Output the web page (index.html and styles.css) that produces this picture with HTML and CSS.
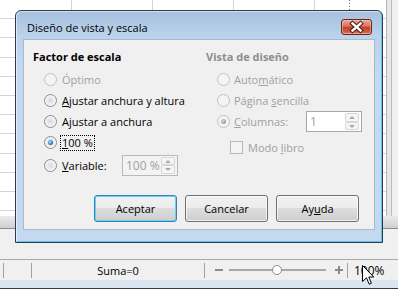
FILE: index.html
```html
<!DOCTYPE html>
<html lang="es">
<head>
    <meta charset="UTF-8">
    <title>Diseño de vista y escala</title>
    <link rel="stylesheet" href="styles.css">
</head>
<body>
<div class="screen">
    <div class="sheet">
        <div class="cells-row">
            <div class="cells"></div>
            <div class="vscroll"></div>
        </div>
        <div class="hscroll"></div>
        <div class="tabbar"></div>
    </div>

    <div class="status">
        <span class="cell cell-a"></span>
        <span class="sep"></span>
        <span class="cell cell-b"></span>
        <span class="sep"></span>
        <span class="cell cell-sum">Suma=0</span>
        <span class="sep"></span>
        <span class="cell cell-zoom">
            <span class="minus"></span>
            <span class="track"><span class="thumb"></span></span>
            <span class="plus"></span>
        </span>
        <span class="sep"></span>
        <span class="cell cell-pct">100%</span>
    </div>
    <div class="taskbar"></div>

    <!-- dialog window floating over the sheet -->
    <div class="dialog">
        <div class="titlebar">
            <span class="title">Diseño de vista y escala</span>
            <span class="close">
                <svg width="31" height="16" viewBox="0 0 31 16">
                    <path d="M11.5 4.5 L19.5 11.5 M19.5 4.5 L11.5 11.5" stroke="#4a1810" stroke-width="4.4" stroke-linecap="square" fill="none"/>
                    <path d="M11.5 4.5 L19.5 11.5 M19.5 4.5 L11.5 11.5" stroke="#ffffff" stroke-width="2.4" stroke-linecap="square" fill="none"/>
                </svg>
            </span>
        </div>
        <div class="client">
            <div class="panes">
                <div class="pane pane-left">
                    <div class="group-title">Factor de escala</div>
                    <div class="rows">
                        <div class="row off"><span class="radio"></span><span>Óptimo</span></div>
                        <div class="row"><span class="radio"></span><span><u>A</u>justar anchura y altura</span></div>
                        <div class="row"><span class="radio"></span><span>Ajustar a anchura</span></div>
                        <div class="row"><span class="radio on"></span><span class="focus"><u>1</u>00 %</span></div>
                        <div class="row row-spin">
                            <span class="radio"></span><span class="label-var"><u>V</u>ariable:</span>
                            <span class="spin"><span class="spin-value">100 %</span><span class="spin-btns"><span class="up"></span><span class="down"></span></span></span>
                        </div>
                    </div>
                </div>
                <div class="pane pane-right">
                    <div class="group-title off">Vista de diseño</div>
                    <div class="rows">
                        <div class="row off"><span class="radio"></span><span>Auto<u>m</u>ático</span></div>
                        <div class="row off"><span class="radio"></span><span>Página <u>s</u>encilla</span></div>
                        <div class="row row-spin off">
                            <span class="radio on"></span><span class="label-col"><u>C</u>olumnas:</span>
                            <span class="spin spin-white"><span class="spin-value">1</span><span class="spin-btns"><span class="up"></span><span class="down"></span></span></span>
                        </div>
                        <div class="row row-check off"><span class="check"></span><span>Modo <u>l</u>ibro</span></div>
                    </div>
                </div>
            </div>
            <div class="buttons">
                <span class="btn btn-default">Aceptar</span>
                <span class="btn">Cancelar</span>
                <span class="btn">Ay<u>u</u>da</span>
            </div>
        </div>
    </div>

    <svg class="cursor" width="13" height="21" viewBox="0 0 13 21">
        <path d="M0.5 0.5 L0.5 16.5 L4.5 12.8 L7.2 19.2 L9.4 18.3 L6.8 12 L11.8 12 Z" fill="#fff" stroke="#000" stroke-width="1"/>
    </svg>
</div>
</body>
</html>
```

FILE: styles.css
```css
body {
    margin: 0;
    font-family: "Open Sans", "Noto Sans", sans-serif;
    font-size: 11px;
    color: #000;
}

.screen {
    position: relative;
    width: 398px;
    height: 289px;
    overflow: hidden;
    background-color: #f0f0f0;
}

/* spreadsheet behind the dialog */
.cells-row {
    display: flex;
    height: 216px;
}

.cells {
    flex: 1;
    background-color: #fff;
    background-image:
        linear-gradient(#6a6a6a 1px, transparent 1px),
        repeating-linear-gradient(to right, transparent 0 71px, #d4d4d4 71px 72px, transparent 72px 81px),
        repeating-linear-gradient(to bottom, transparent 0 18.2px, #d4d4d4 18.2px 19.2px);
    background-size: 1px 3px, auto, auto;
    background-position: 349px 0, 0 0, 0 0;
    background-repeat: repeat-y, repeat, repeat;
}

.vscroll {
    width: 11px;
    border-left: 1px solid #b5b5b5;
    background: linear-gradient(to right, #e6e6e6 0 4px, #bcbcbc 4px 5px, #f0f0f0 5px);
}

.hscroll {
    height: 12px;
    background: linear-gradient(#eaeaea, #cfcfcf);
}

.tabbar {
    height: 30px;
    border-top: 1px solid #8c8c8c;
    background-color: #f0f0f0;
}

/* status bar */
.status {
    display: flex;
    align-items: center;
    height: 20px;
    border-top: 1px solid #a8a8a8;
    background-color: #f0f0f0;
}

.sep {
    width: 1px;
    height: 15px;
    background-color: #a0a0a0;
}

.cell-a { width: 3px; }
.cell-b { width: 27px; }

.cell-sum {
    width: 172px;
    text-align: center;
}

.cell-zoom {
    display: flex;
    align-items: center;
    width: 142px;
    height: 20px;
}

.minus {
    width: 8px;
    height: 2px;
    margin-left: 10px;
    background-color: #8a8a8a;
}

.track {
    position: relative;
    width: 97px;
    height: 2px;
    margin-left: 6px;
    background-color: #a8a8a8;
}

.thumb {
    position: absolute;
    left: 43px;
    top: -4px;
    width: 10px;
    height: 10px;
    box-sizing: border-box;
    border: 1px solid #8a8a8a;
    border-radius: 50%;
    background-color: #fff;
}

.plus {
    position: relative;
    width: 8px;
    height: 8px;
    margin-left: 9px;
    background:
        linear-gradient(#8a8a8a, #8a8a8a) center / 8px 2px no-repeat,
        linear-gradient(#8a8a8a, #8a8a8a) center / 2px 8px no-repeat;
}

.cell-pct {
    padding-left: 6px;
    font-size: 12px;
}

.taskbar {
    height: 8px;
    border-bottom: 1px solid #3a3a3a;
    background-color: #dbe5f2;
}

/* dialog window */
.dialog {
    position: absolute;
    left: 15px;
    top: 10px;
    width: 368px;
    height: 233px;
    box-sizing: border-box;
    border: 1px solid #2b3a4f;
    border-radius: 6px 6px 0 0;
    background: linear-gradient(#a6c0df 0, #bcd3ec 26px, #c4d8ef 60px, #c4d8ef);
    box-shadow: inset 1px 1px 0 rgba(255, 255, 255, 0.55), inset -1px -1px 0 #5ec6ec;
}

.titlebar {
    display: flex;
    justify-content: space-between;
    align-items: flex-start;
    height: 28px;
    padding-left: 11px;
}

.title {
    margin-top: 9px;
    line-height: 15px;
}

.close {
    display: block;
    width: 31px;
    height: 16px;
    margin-top: 8px;
    margin-right: 10px;
    box-sizing: border-box;
    border: 1px solid #6e2419;
    border-radius: 3px;
    background: linear-gradient(#e9a898 0, #d8735e 45%, #c34128 50%, #cf5b3d 85%, #e08a66 100%);
    box-shadow: inset 0 0 0 1px rgba(255, 210, 200, 0.45);
}

.close svg {
    display: block;
    margin: -1px;
}

.client {
    display: flex;
    flex-direction: column;
    height: 191px;
    margin: 0 7px;
    box-sizing: border-box;
    border: 1px solid #a4b9d2;
    background-color: #f0f0f0;
}

.panes {
    display: flex;
    padding-top: 9px;
}

.pane-left {
    width: 173px;
    padding-left: 9px;
}

.group-title {
    font-weight: bold;
    line-height: 16px;
}

.group-title.off {
    color: #8e8e8e;
}

.rows {
    margin-top: 4px;
}

.row {
    display: flex;
    align-items: center;
    height: 21px;
    padding-left: 11px;
}

.row.off {
    color: #a0a0a0;
}

.row-spin {
    height: 22px;
    margin-top: 1px;
}

.pane-right .row-spin {
    height: 21px;
    margin-top: 0;
}

.row-check {
    margin-top: 5px;
    padding-left: 24px;
}

u {
    text-decoration: underline;
    text-underline-offset: 1px;
}

.radio {
    position: relative;
    flex: none;
    width: 13px;
    height: 13px;
    margin-right: 5px;
    box-sizing: border-box;
    border: 1px solid #8b8b8b;
    border-radius: 50%;
    background: radial-gradient(circle at 50% 50%, #d8d8d8 0, #ececec 45%, #f8f8f8 70%, #e2e2e2 100%);
}

.row.off .radio {
    border-color: #c2c2c2;
    background: #f4f4f4;
}

.pane-right .radio {
    margin-right: 4px;
}

.radio.on::after {
    content: "";
    position: absolute;
    left: 3px;
    top: 3px;
    width: 5px;
    height: 5px;
    border-radius: 50%;
    background: radial-gradient(circle at 40% 40%, #b4e4ff 0, #2f7fca 55%, #164a86 100%);
}

.row.off .radio.on::after {
    background: radial-gradient(circle at 40% 40%, #d8d8d8 0, #9a9a9a 70%);
}

.focus {
    outline: 1px dotted #000;
    outline-offset: 0;
    padding: 0 1px;
    margin-left: -1px;
    line-height: 14px;
}

.check {
    width: 13px;
    height: 13px;
    margin-right: 5px;
    box-sizing: border-box;
    border: 1px solid #b8b8b8;
    background-color: #f4f4f4;
}

.label-var { width: 60px; }
.label-col { width: 72px; }

.spin {
    display: flex;
    width: 56px;
    height: 21px;
    box-sizing: border-box;
    padding: 1px;
    border: 1px solid #b8b8b8;
    background-color: #f3f3f3;
    color: #a0a0a0;
}

.spin-white {
    border-color: #a8a8a8;
    background-color: #fff;
}

.spin-value {
    flex: 1;
    padding-left: 2px;
    line-height: 17px;
    font-size: 12px;
}

.spin-btns {
    display: flex;
    flex-direction: column;
    width: 14px;
    margin-right: 1px;
}

.spin-btns span {
    position: relative;
    flex: 1;
    box-sizing: border-box;
    border: 1px solid #d6d6d6;
    border-radius: 2px;
    background-color: #f6f6f6;
}

.spin-btns span::after {
    content: "";
    position: absolute;
    left: 3px;
    top: 2px;
    border-left: 3px solid transparent;
    border-right: 3px solid transparent;
}

.spin-btns .up::after {
    border-bottom: 3px solid #a8a8a8;
}

.spin-btns .down::after {
    border-top: 3px solid #a8a8a8;
}

.buttons {
    display: flex;
    justify-content: flex-end;
    gap: 8px;
    margin-top: auto;
    padding: 0 15px 7px 0;
}

.btn {
    display: flex;
    align-items: center;
    justify-content: center;
    width: 83px;
    height: 27px;
    box-sizing: border-box;
    border: 1px solid #707070;
    border-radius: 3px;
    background: linear-gradient(#f2f2f2 0, #ebebeb 50%, #dddddd 50%, #cfcfcf 100%);
    box-shadow: inset 0 0 0 1px rgba(255, 255, 255, 0.7);
}

.btn-default {
    border-color: #3c7fb1;
    box-shadow: inset 0 0 0 1px #5fd6f7;
}

.cursor {
    position: absolute;
    left: 362px;
    top: 265px;
}
```
